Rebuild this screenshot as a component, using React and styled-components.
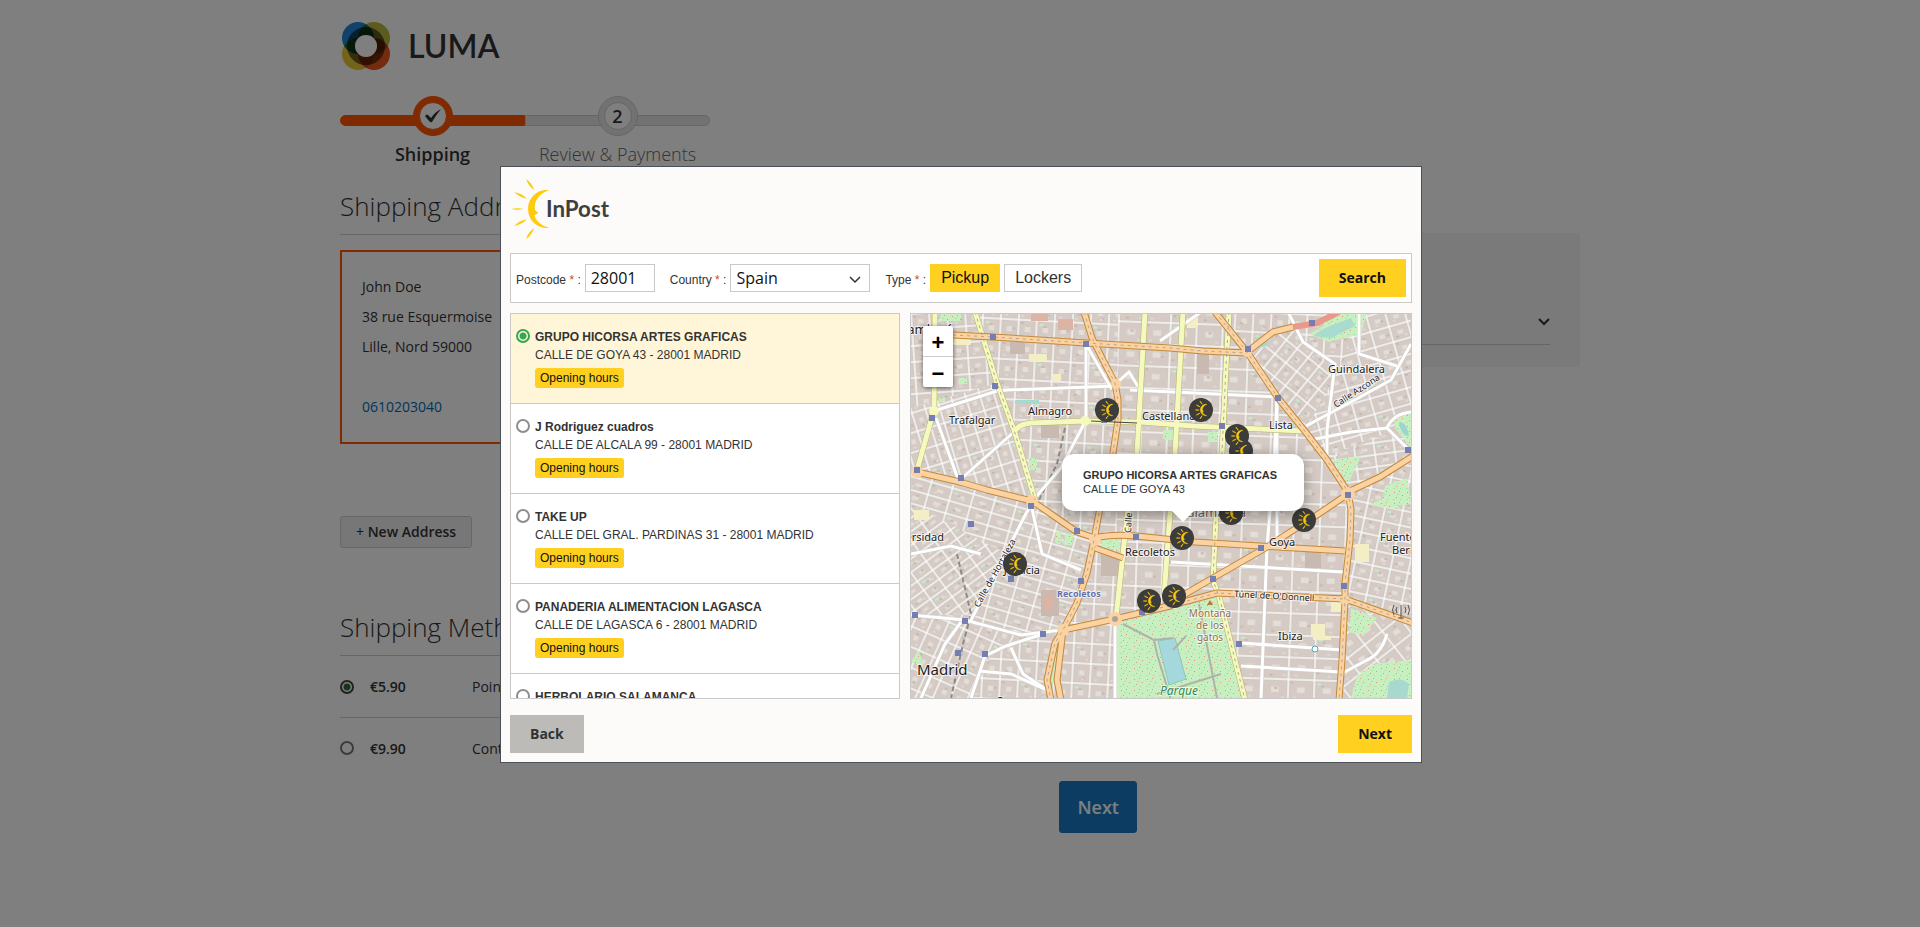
import React, { useState } from 'react'
import styled, { createGlobalStyle, css } from 'styled-components'

const points = [
    { id: 1, name: 'GRUPO HICORSA ARTES GRAFICAS', street: 'CALLE DE GOYA 43', city: '28001 MADRID' },
    { id: 2, name: 'J Rodriguez cuadros', street: 'CALLE DE ALCALA 99', city: '28001 MADRID' },
    { id: 3, name: 'TAKE UP', street: 'CALLE DEL GRAL. PARDINAS 31', city: '28001 MADRID' },
    { id: 4, name: 'PANADERIA ALIMENTACION LAGASCA', street: 'CALLE DE LAGASCA 6', city: '28001 MADRID' },
    { id: 5, name: 'HERBOLARIO SALAMANCA', street: 'CALLE DE AYALA 78', city: '28001 MADRID' },
]

const pins = [
    [196, 96], [290, 96], [330, 137], [326, 122], [320, 199],
    [393, 206], [271, 224], [238, 287], [263, 282], [104, 250],
]

const metro = [
    [82, 23], [175, 30], [84, 72], [21, 104], [6, 156], [50, 164], [120, 192], [60, 210],
    [166, 217], [225, 223], [170, 267], [100, 265], [4, 301], [54, 307], [132, 320], [47, 339],
    [74, 340], [337, 35], [401, 9], [367, 84], [311, 112], [497, 136], [437, 181], [350, 234],
    [302, 265], [433, 272], [328, 330], [231, 298], [193, 106],
]

// street grids: outline, block size and direction of each district
const districts = [
    { id: 'base', d: 'M0 0H500V384H0Z', w: 18, h: 20, r: 3 },
    { id: 'trafalgar', d: 'M0 94L86 69L124 186L0 160Z', w: 14, h: 19, r: -17 },
    { id: 'chamberi', d: 'M0 0H64L86 69L0 94Z', w: 18, h: 16, r: -4 },
    { id: 'justicia', d: 'M0 160L124 190L184 226L152 314L100 325L0 300Z', w: 22, h: 13, r: 16 },
    { id: 'malasana', d: 'M0 190L96 240L66 300L0 302Z', w: 19, h: 11, r: -36 },
    { id: 'sol', d: 'M0 300L130 320L80 340L60 384H0Z', w: 16, h: 19, r: 24 },
    { id: 'salamanca', d: 'M207 0H304L336 38L436 178V384H334L305 283L205 304Z', w: 26, h: 22, r: 2 },
    { id: 'guindalera', d: 'M336 38L378 12L425 60L400 120Z', w: 14, h: 18, r: 39 },
    { id: 'parqueavenidas', d: 'M425 60L450 0H500V110L415 142L395 116Z', w: 19, h: 16, r: -16 },
    { id: 'ventas', d: 'M416 146L500 110V142L437 176Z', w: 20, h: 12, r: -8 },
    { id: 'berro', d: 'M440 178L500 146V308L434 286Z', w: 18, h: 15, r: 12 },
    { id: 'estrella', d: 'M434 290L500 312V384H430Z', w: 22, h: 20, r: -38 },
]

const orange = [
    'M42 21L82 23L175 29L259 34L292 37L336 39',
    'M173 -2L181 24L192 46L204 69L207 86L207 106L202 139L188 199L183 226L176 259L166 289L152 316L144 329L136 366L140 386',
    'M152 316L150 333L146 366L150 386',
    'M6 158L49 168L76 176L121 187L140 200L166 218L184 224Q200 220 225 222L284 228L349 232L434 237',
    'M184 234L212 244',
    'M304 -2L336 38L367 84L393 116L416 146L437 178L440 196L439 226L434 269L434 286L431 346L428 386',
    'M437 178L469 163L502 142',
    'M437 180L406 201L356 233L302 264L276 279L259 292L204 305L152 316',
    'M249 294L280 286L306 279L349 281L434 285L502 309',
    'M336 38L362 18L382 13',
]

const yellow = [
    'M24 -2L23 96L6 156',
    'M64 -2L86 69L104 119L124 186',
    'M104 117Q108 110 120 109L174 107L229 108L282 112L392 117',
    'M234 -2L226 139L216 202L205 304',
    'M272 -2L264 139L259 200L253 282',
    'M318 -2L315 53L311 139L305 203L302 266L309 286L334 386',
]

const white = [
    'M23 97L86 77L96 76L205 72',
    'M175 30V107',
    'M174 108L150 154L122 186L102 225L60 306',
    'M104 117L50 165',
    'M25 104L47 165',
    'M175 30L200 74L218 58L228 74',
    'M0 301L54 306L110 321L150 316',
    'M132 320L95 332L74 342L60 384',
    'M120 190L131 240L170 256',
    'M100 334L112 360L136 376',
    'M68 357L100 360L138 377',
    'M219 76L284 79L366 83V232',
    'M366 84L363 150L356 233L350 384',
    'M260 248L432 258',
    'M330 352L430 358',
    'M330 329L432 336',
    'M204 308V386',
    'M249 27L290 -2',
    'M377 -2L392 28L424 50L416 116V146',
    'M395 112L440 88L480 66L500 30',
    'M404 125L440 118L476 114Q482 100 500 98',
    'M476 114L496 134',
    'M448 -2V40L486 52',
    'M430 360L456 346Q470 340 476 320',
    'M0 240L40 232L70 240',
    'M10 384L34 330L50 308',
]

const greens = [
    'M398 20L412 12L424 -2H456L450 20L418 28Z',
    'M422 146L450 142L437 170Z',
    'M191 223L208 224L210 238L190 233Z',
    'M145 218L151 218L149 230L144 230Z',
    'M154 220L163 220L161 231L153 231Z',
    'M148 318L145 368L140 370L145 335Z',
    'M30 0H50V7H28Z',
    'M0 348L8 336L12 352Z',
    'M446 362L462 350L500 346V384H440Z',
    'M440 294L466 304L452 322L438 318Z',
    'M482 102L500 98V134L484 114Z',
    'M458 190L480 182L490 196Z',
    'M474 172L496 164L500 190L470 194Z',
    'M48 64H56V70H48ZM28 84H34V88H28ZM118 144H126V156H118ZM252 116H262V126H252ZM297 118H307V128H297Z',
]

const Mark = ({ x, y, scale, bold }) => (
    <g
        transform={`translate(${x} ${y}) scale(${scale}) translate(-123 -147)`}
        fill="#fecb0c"
        stroke="#fecb0c"
        strokeWidth={bold ? 5 : 0}
        strokeLinejoin="round"
    >
        <path d="M66 147Q85 142 104 147Q85 152 66 147Z" />
        <path d="M76 96Q98 100 114 116Q90 112 76 96Z" />
        <path d="M76 198Q90 182 114 178Q98 194 76 198Z" />
        <path d="M111 57Q128 68 136 91Q118 78 111 57Z" />
        <path d="M111 237Q118 216 136 203Q128 226 111 237Z" />
        <path d="M180 91C150 86 117 110 117 147C117 184 150 208 180 203C156 198 140 182 136 166L148 159L138 150C133 121 154 99 180 91Z" />
    </g>
)

const LumaLogo = () => (
    <LumaMark viewBox="0 0 50 50" aria-hidden="true">
        <circle cx="17" cy="17" r="16" fill="#1f86d8" />
        <circle cx="33" cy="17" r="16" fill="#b9b840" />
        <circle cx="17" cy="33" r="16" fill="#e8c832" />
        <circle cx="33" cy="33" r="16" fill="#e8561c" />
        <circle cx="25" cy="25" r="15" fill="none" stroke="#77776a" strokeWidth="8" />
        <circle className="hole" cx="25" cy="25" r="11" fill="#fff" />
    </LumaMark>
)

const CityMap = () => (
    <MapDrawing viewBox="0 0 500 384" preserveAspectRatio="xMidYMid slice" role="img" aria-label="Madrid">
        <defs>
            {districts.map(({ id, w, h, r }) => (
                <pattern key={id} id={id} width={w * 3} height={h * 2} patternUnits="userSpaceOnUse" patternTransform={`rotate(${r})`}>
                    <rect width={w * 3} height={h * 2} fill="#fbfafa" />
                    {[0, 1, 2, 3, 4, 5].map((n) => {
                        const x = (n % 3) * w + 1
                        const y = Math.floor(n / 3) * h + 1
                        return (
                            <g key={n}>
                                <rect x={x} y={y} width={w - 2} height={h - 2} fill="#d5cbc4" stroke="#c9c2bc" strokeWidth="0.5" />
                                <rect x={x + w * 0.3} y={y + h * 0.3} width={w * 0.3} height={h * 0.25} fill="#e4ded9" />
                                <rect x={x + 1 + (n * 5) % (w - 6)} y={y + 1 + (n * 3) % (h - 6)} width="3" height="2" fill="#c6bab1" />
                                <rect x={x + 1 + (n * 7 + 3) % (w - 6)} y={y + h - 6} width="3" height="2" fill="#ded7d1" />
                            </g>
                        )
                    })}
                    <rect x={w + 3} y="3" width="4" height="2" fill="#c3eccb" />
                </pattern>
            ))}
            <pattern id="trees" width="13" height="11" patternUnits="userSpaceOnUse">
                <rect width="13" height="11" fill="#c8efc0" />
                <rect x="2" y="2" width="1" height="1" fill="#ee9078" />
                <rect x="7" y="1" width="1" height="1" fill="#e59a80" />
                <rect x="10" y="5" width="1" height="1" fill="#ee9078" />
                <rect x="4" y="7" width="1" height="1" fill="#e59a80" />
                <rect x="8" y="9" width="1" height="1" fill="#9fd6a0" />
                <rect x="1" y="9" width="2" height="1" fill="#b2dfab" />
                <rect x="5" y="4" width="2" height="1" fill="#b2dfab" />
            </pattern>
        </defs>
        {districts.map(({ id, d }) => <path key={id} d={d} fill={`url(#${id})`} />)}
        {greens.map((d) => <path key={d} d={d} fill="url(#trees)" />)}
        <path d="M402 22L414 14L440 4L444 12L420 24Z" fill="#a9dcd0" />
        <path d="M488 108Q496 108 498 122Q490 122 488 108Z" fill="#9fd3cf" />
        <path d="M478 368Q490 362 498 370L496 384H476Z" fill="#a7d9cf" />
        <path d="M104 86H128V90H104ZM350 27L358 25L356 32L348 34Z" fill="#a7d9cf" />
        <g fill="#f4eec4">
            <path d="M43 24H60V31H43ZM118 40H136V48H118ZM142 60H150V68H142ZM276 4H286V14H276ZM3 196H18V206H3ZM420 284H432V298H420ZM444 230H458V248H444ZM400 310H414V322H400ZM402 322H420V326H402Z" />
        </g>
        <g fill="#c9bab1">
            <path d="M99 28H114V40H99ZM286 40H298V60H286ZM190 240H208V262H190ZM394 238H410V254H394ZM130 110H148V124H130ZM130 276H148V302H130Z" />
        </g>
        <path d="M120 0H137V7H120ZM147 5H162V16H147ZM133 282H142V296H133Z" fill="#dcb4a5" />
        <path d="M154 114L146 150L128 186M46 240L60 300L52 330L40 384" fill="none" stroke="#8b8a89" strokeWidth="2" strokeDasharray="5 3" />
        <path d="M206 309L259 296L306 283L332 384H205Z" fill="url(#trees)" />
        <path d="M247 327L264 324L275 365L258 371Z" fill="#a5d8dc" stroke="#8fc8bb" />
        <path d="M212 310L243 326L246 340L260 386M243 326L262 324M246 380L310 360M288 290L306 384M262 336L275 322" fill="none" stroke="#b2b2ac" strokeWidth="2" />
        <g fill="none" stroke="#cfcdca" strokeWidth="4">
            {white.map((d) => <path key={d} d={d} />)}
        </g>
        <g fill="none" stroke="#fff" strokeWidth="3">
            {white.map((d) => <path key={d} d={d} />)}
        </g>
        <g fill="none" stroke="#b2b46a" strokeWidth="6" strokeLinejoin="round">
            {yellow.map((d) => <path key={d} d={d} />)}
        </g>
        <g fill="none" stroke="#f6f9bd" strokeWidth="5" strokeLinejoin="round">
            {yellow.map((d) => <path key={d} d={d} />)}
        </g>
        <circle cx="23" cy="97" r="5" fill="#f6f9bd" />
        <circle cx="174" cy="107" r="5" fill="#f6f9bd" />
        <g fill="none" stroke="#c08a3e" strokeWidth="7" strokeLinejoin="round">
            {orange.map((d) => <path key={d} d={d} />)}
        </g>
        <g fill="none" stroke="#fcd2a0" strokeWidth="5" strokeLinejoin="round">
            {orange.map((d) => <path key={d} d={d} />)}
        </g>
        <g fill="#fcd2a0">
            <circle cx="6" cy="158" r="6" />
            <circle cx="205" cy="70" r="5" />
            <circle cx="121" cy="187" r="6" />
            <circle cx="184" cy="226" r="6" />
            <circle cx="204" cy="305" r="7" />
            <circle cx="152" cy="316" r="6" />
            <circle cx="336" cy="38" r="5" />
            <circle cx="437" cy="180" r="7" />
            <circle cx="434" cy="286" r="5" />
        </g>
        <circle cx="204" cy="305" r="3" fill="#a9a59c" />
        <g fill="none" stroke="#b0a59a" strokeWidth="1" strokeDasharray="3 4">
            <path d={orange[0]} />
            <path d={orange[1]} />
            <path d={orange[5]} />
            <path d={yellow[1]} />
            <path d={yellow[5]} />
            <path d={orange[8]} />
        </g>
        <path d="M180 107L226 109" stroke="#444" />
        <path d="M382 13L406 9L428 -2" fill="none" stroke="#e9988c" strokeWidth="6" />
        <g fill="#747eb2">
            {metro.map(([x, y]) => <rect key={`${x}-${y}`} x={x - 3} y={y - 3} width="6" height="6" />)}
        </g>
        <circle cx="404" cy="335" r="3" fill="#fff" stroke="#58a5b8" />
        <path d="M490 291V304M487 304H493M486 293Q484 296 486 299M494 293Q496 296 494 299M483 291Q480 296 483 301M497 291Q500 296 497 301" fill="none" stroke="#555" />
        <path d="M296 291L299 286L302 291Z" fill="#b57a35" />
        <MapLabel x="-20" y="20" $size={13}>Chamberí</MapLabel>
        <MapLabel x="117" y="101">Almagro</MapLabel>
        <MapLabel x="38" y="110">Trafalgar</MapLabel>
        <MapLabel x="231" y="106">Castellana</MapLabel>
        <MapLabel x="358" y="115">Lista</MapLabel>
        <MapLabel x="417" y="59">Guindalera</MapLabel>
        <MapLabel $size={9} transform="translate(425 94) rotate(-33)">Calle Azcona</MapLabel>
        <MapLabel x="33" y="227" textAnchor="end">Universidad</MapLabel>
        <MapLabel x="129" y="260" textAnchor="end">Justicia</MapLabel>
        <MapLabel $size={9} transform="translate(68 294) rotate(-61)">Calle de Hortaleza</MapLabel>
        <MapLabel $size={9} transform="translate(220 219) rotate(-87)">Calle de Serrano</MapLabel>
        <MapLabel x="214" y="242">Recoletos</MapLabel>
        <MapLabel x="146" y="283" $size={9} $color="#6670ad" $bold>Recoletos</MapLabel>
        <MapLabel x="269" y="203" $size={13} $color="#666">Salamanca</MapLabel>
        <MapLabel x="358" y="232">Goya</MapLabel>
        <MapLabel x="469" y="227">Fuente del</MapLabel>
        <MapLabel x="481" y="240">Berro</MapLabel>
        <MapLabel $size={9} transform="translate(323 283) rotate(3)">Túnel de O'Donnell</MapLabel>
        <MapLabel x="367" y="326">Ibiza</MapLabel>
        <MapLabel x="299" y="303" $size={10} $color="#937045" textAnchor="middle">Montaña</MapLabel>
        <MapLabel x="299" y="315" $size={10} $color="#937045" textAnchor="middle">de los</MapLabel>
        <MapLabel x="299" y="327" $size={10} $color="#937045" textAnchor="middle">gatos</MapLabel>
        <MapLabel x="249" y="381" $size={12} $color="#2f8a4a" fontStyle="italic">Parque</MapLabel>
        <MapLabel x="6" y="361" $size={15}>Madrid</MapLabel>
        <MapLabel x="85" y="391">Centro</MapLabel>
        {pins.map(([x, y]) => (
            <g key={`${x}-${y}`}>
                <circle cx={x} cy={y} r="12" fill="#3c3c3b" />
                <Mark x={x} y={y} scale={0.1} bold />
            </g>
        ))}
    </MapDrawing>
)

const App = () => {
    const [selected, setSelected] = useState(1)
    const [type, setType] = useState('Pickup')
    const [postcode, setPostcode] = useState('28001')
    const [method, setMethod] = useState('point')
    const current = points.find((point) => point.id === selected)

    return (
        <>
            <GlobalStyle />
            <Page>
                <Brand href="#">
                    <LumaLogo />
                    LUMA
                </Brand>
                <Steps>
                    <Step $active>
                        <Bullet $active>
                            <svg width="18" height="16" viewBox="0 0 18 16" aria-hidden="true">
                                <path d="M1 8Q3 5 5 8L7 10Q11 4 17 1Q12 7 8 14Q7 15 5 13Z" fill="#333" />
                            </svg>
                        </Bullet>
                        Shipping
                    </Step>
                    <Step>
                        <Bullet>2</Bullet>
                        Review &amp; Payments
                    </Step>
                </Steps>
                <Columns>
                    <main>
                        <Title>Shipping Address</Title>
                        <Address>
                            John Doe<br />
                            38 rue Esquermoise<br />
                            Lille, Nord 59000<br />
                            <br />
                            <a href="tel:0610203040">0610203040</a>
                        </Address>
                        <NewAddress type="button"><span>+</span> New Address</NewAddress>
                        <Title>Shipping Methods</Title>
                        <Method>
                            <Radio $page type="radio" name="method" checked={method === 'point'} onChange={() => setMethod('point')} />
                            <b>€5.90</b>
                            Point
                        </Method>
                        <Method>
                            <Radio $page type="radio" name="method" checked={method === 'contact'} onChange={() => setMethod('contact')} />
                            <b>€9.90</b>
                            Contact
                        </Method>
                        <Continue type="button">Next</Continue>
                    </main>
                    <Summary>
                        <SummaryToggle type="button" aria-label="Order Summary">
                            <Chevron width="12" height="8" viewBox="0 0 12 8"><path d="M1 1L6 6L11 1" /></Chevron>
                        </SummaryToggle>
                    </Summary>
                </Columns>
            </Page>
            <Backdrop>
                <Modal role="dialog" aria-label="InPost">
                    <ModalHeader>
                        <svg width="102" height="62" viewBox="66 54 306 186" role="img" aria-label="InPost">
                            <Mark x={123} y={147} scale={1} />
                            <LogoText x="171" y="171">InPost</LogoText>
                        </svg>
                    </ModalHeader>
                    <Filters>
                        <Field>
                            <label htmlFor="postcode">Postcode <em>*</em> :</label>
                            <TextInput id="postcode" value={postcode} onChange={(e) => setPostcode(e.target.value)} />
                        </Field>
                        <Field>
                            <label htmlFor="country">Country <em>*</em> :</label>
                            <SelectBox>
                                <select id="country" defaultValue="ES">
                                    <option value="ES">Spain</option>
                                    <option value="FR">France</option>
                                </select>
                                <Chevron width="12" height="8" viewBox="0 0 12 8"><path d="M1 1L6 6L11 1" /></Chevron>
                            </SelectBox>
                        </Field>
                        <Field>
                            <label id="type">Type <em>*</em> :</label>
                            <TypeGroup role="group" aria-labelledby="type">
                                {['Pickup', 'Lockers'].map((name) => (
                                    <TypeButton key={name} type="button" $active={type === name} onClick={() => setType(name)}>{name}</TypeButton>
                                ))}
                            </TypeGroup>
                        </Field>
                        <Action type="button">Search</Action>
                    </Filters>
                    <Results>
                        <List>
                            {points.map((point) => (
                                <Item key={point.id} $selected={point.id === selected}>
                                    <Radio
                                        id={`point-${point.id}`}
                                        type="radio"
                                        name="point"
                                        checked={point.id === selected}
                                        onChange={() => setSelected(point.id)}
                                    />
                                    <div>
                                        <label htmlFor={`point-${point.id}`}>{point.name}</label>
                                        <p>{point.street} - {point.city}</p>
                                        <Hours type="button">Opening hours</Hours>
                                    </div>
                                </Item>
                            ))}
                        </List>
                        <MapBox>
                            <CityMap />
                            <ZoomControl>
                                <button type="button" aria-label="Zoom in">+</button>
                                <button type="button" aria-label="Zoom out">−</button>
                            </ZoomControl>
                            <Popup>
                                <b>{current.name}</b>
                                <span>{current.street}</span>
                            </Popup>
                        </MapBox>
                    </Results>
                    <ModalFooter>
                        <Action type="button" $muted>Back</Action>
                        <Action type="button">Next</Action>
                    </ModalFooter>
                </Modal>
            </Backdrop>
        </>
    )
}

const GlobalStyle = createGlobalStyle`
    *{
        box-sizing: border-box;
    }
    body{
        margin: 0;
        background: white;
        color: #333;
        font-family: "Open Sans", "Noto Sans", sans-serif;
        font-size: 14px;
    }
    button, input, select{
        font-family: inherit;
    }
`
const Page = styled.div`
    max-width: 1280px;
    margin: 0 auto;
    padding: 21px 20px 40px;
`
const Brand = styled.a`
    display: flex;
    align-items: center;
    gap: 16px;
    color: #333;
    font-family: Lato, sans-serif;
    font-size: 32px;
    font-weight: 600;
    line-height: 50px;
    text-decoration: none;
`
const LumaMark = styled.svg`
    width: 52px;
    height: 50px;
    isolation: isolate;
    circle{
        mix-blend-mode: multiply;
    }
    .hole{
        mix-blend-mode: normal;
    }
`
const Steps = styled.ol`
    display: flex;
    margin: 25px 0 0;
    padding: 0;
    list-style: none;
`
const Step = styled.li`
    position: relative;
    display: flex;
    flex-direction: column;
    align-items: center;
    gap: 8px;
    width: 185px;
    font-size: 18px;
    line-height: 20px;
    font-weight: ${(props) => (props.$active ? 600 : 300)};
    color: ${(props) => (props.$active ? '#333' : '#666')};
    &::before{
        content: '';
        position: absolute;
        top: 19px;
        left: 0;
        right: 0;
        height: 9px;
        background: ${(props) => (props.$active ? '#ff5501' : '#e4e4e4')};
        border: 1px solid ${(props) => (props.$active ? '#ff5501' : '#ccc')};
        border-radius: ${(props) => (props.$active ? '6px 0 0 6px' : '0 6px 6px 0')};
    }
`
const Bullet = styled.span`
    position: relative;
    display: grid;
    place-items: center;
    width: 40px;
    height: 40px;
    border-radius: 50%;
    font-weight: 600;
    color: #333;
    background: ${(props) => (props.$active ? '#ff5501' : '#e4e4e4')};
    border: 1px solid ${(props) => (props.$active ? '#ff5501' : '#ccc')};
    isolation: isolate;
    &::before{
        content: '';
        position: absolute;
        inset: 5px;
        z-index: -1;
        border-radius: 50%;
        background: white;
        border: 1px solid ${(props) => (props.$active ? '#ff5501' : '#ccc')};
    }
`
const Columns = styled.div`
    display: grid;
    grid-template-columns: minmax(0, 797fr) minmax(0, 414fr);
    gap: 29px;
    align-items: start;
`
const Title = styled.h2`
    margin: 24px 0 15px;
    padding-bottom: 10px;
    border-bottom: 1px solid #ccc;
    font-size: 26px;
    font-weight: 300;
    line-height: 36px;
`
const Address = styled.address`
    width: 33%;
    margin-bottom: 72px;
    padding: 20px;
    border: 2px solid #ff5501;
    font-style: normal;
    line-height: 30px;
    a{
        color: #006bb4;
        text-decoration: none;
    }
`
const NewAddress = styled.button`
    display: block;
    margin-bottom: 61px;
    padding: 7px 15px;
    border: 1px solid #ccc;
    border-radius: 3px;
    background: #eee;
    color: #333;
    font-size: 14px;
    font-weight: 600;
    line-height: 16px;
    span{
        font-weight: 400;
    }
`
const Method = styled.label`
    display: grid;
    grid-template-columns: 14px 86px 1fr;
    column-gap: 16px;
    align-items: center;
    height: 61px;
    b{
        font-weight: 600;
    }
    ${Title} + &{
        margin-top: -15px;
    }
    & + &{
        border-top: 1px solid #ccc;
    }
`
const Continue = styled.button`
    display: block;
    margin: 3px 0 0 auto;
    padding: 14px 17px;
    border: 1px solid #1979c3;
    border-radius: 3px;
    background: #1979c3;
    color: white;
    font-size: 18px;
    font-weight: 600;
    line-height: 22px;
`
const Summary = styled.aside`
    margin-top: 69px;
    padding: 22px 30px;
    background: #f5f5f5;
`
const SummaryToggle = styled.button`
    display: flex;
    justify-content: flex-end;
    align-items: flex-end;
    width: 100%;
    height: 90px;
    padding: 0 0 18px;
    border: 0;
    border-bottom: 1px solid #ccc;
    background: none;
`
const Chevron = styled.svg`
    fill: none;
    stroke: #333;
    stroke-width: 2;
`
const Backdrop = styled.div`
    position: fixed;
    inset: 0;
    display: flex;
    align-items: flex-start;
    padding: 166px 498px 0 500px;
    background: rgba(0, 0, 0, 0.5);
    @media (max-width: 1700px){
        padding: 20px;
    }
`
const Modal = styled.section`
    flex: 1;
    min-width: 0;
    padding: 0 9px 9px;
    border: 1px solid #4a5058;
    background: #fcfbf9;
    font-family: "Liberation Sans", Arial, sans-serif;
    font-size: 12px;
    line-height: 18px;
`
const ModalHeader = styled.header`
    padding: 11px 1px 13px;
    svg{
        display: block;
    }
`
const LogoText = styled.text`
    font-family: Lato, sans-serif;
    font-size: 67px;
    font-weight: 700;
    fill: #3f3f3f;
`
const Filters = styled.form`
    display: flex;
    align-items: center;
    gap: 15px;
    padding: 5px;
    border: 1px solid #c9c9c9;
    background: white;
    > button{
        margin-left: auto;
    }
`
const Field = styled.div`
    display: flex;
    align-items: center;
    gap: 4px;
    label{
        padding-top: 3px;
    }
    em{
        color: #d14a1c;
        font-style: normal;
    }
`
const control = css`
    height: 28px;
    border: 1px solid #c9c9c9;
    background: white;
    color: #111;
    font-size: 16px;
`
const TextInput = styled.input`
    ${control}
    width: 70px;
    padding: 0 5px;
    font-family: "Open Sans", "Noto Sans", sans-serif;
`
const SelectBox = styled.div`
    position: relative;
    select{
        ${control}
        appearance: none;
        display: block;
        width: 140px;
        padding: 0 5px;
        border-radius: 0;
        font-family: "Open Sans", "Noto Sans", sans-serif;
    }
    svg{
        position: absolute;
        top: 12px;
        right: 9px;
        stroke-width: 1.5;
        pointer-events: none;
    }
`
const TypeGroup = styled.div`
    display: flex;
    gap: 4px;
`
const TypeButton = styled.button`
    ${control}
    padding: 0 10px;
    color: #333;
    ${(props) => props.$active && css`
        border-color: #ffd01f;
        background: #ffd01f;
        color: #111;
    `}
`
const Action = styled.button`
    padding: 0 20px;
    border: 0;
    background: ${(props) => (props.$muted ? '#bdbbb8' : '#ffd01f')};
    color: ${(props) => (props.$muted ? '#333' : '#111')};
    font-family: "Open Sans", "Noto Sans", sans-serif;
    font-size: 14px;
    font-weight: 700;
    line-height: 38px;
`
const Results = styled.div`
    display: grid;
    grid-template-columns: minmax(0, 390fr) minmax(0, 502fr);
    gap: 10px;
    height: 386px;
    margin-top: 10px;
`
const List = styled.ul`
    height: 386px;
    margin: 0;
    padding: 0;
    overflow: hidden;
    border: 1px solid #c9c9c9;
    border-top: 0;
    list-style: none;
`
const Item = styled.li`
    display: flex;
    align-items: flex-start;
    gap: 5px;
    height: 90px;
    padding: 14px 5px;
    border-top: 1px solid #c9c9c9;
    background: ${(props) => (props.$selected ? '#fff6d9' : 'white')};
    label{
        display: block;
        font-weight: 700;
    }
    p{
        margin: 0 0 4px;
    }
`
const Radio = styled.input`
    appearance: none;
    flex: none;
    width: 14px;
    height: 14px;
    margin: ${(props) => (props.$page ? 0 : '1px 0 0')};
    border: 2px solid ${(props) => (props.$page ? '#777' : '#8e8e8e')};
    border-radius: 50%;
    &:checked{
        border-color: ${(props) => (props.$page ? '#444' : '#37a551')};
        background: radial-gradient(circle, ${(props) => (props.$page ? '#2c6b35' : '#37a551')} 3px, transparent 4px);
    }
`
const Hours = styled.button`
    display: block;
    padding: 0 5px;
    border: 0;
    border-radius: 3px;
    background: #ffd01f;
    color: #111;
    font-size: 12px;
    line-height: 20px;
`
const MapBox = styled.div`
    position: relative;
    overflow: hidden;
    border: 1px solid #c9c9c9;
`
const MapDrawing = styled.svg`
    display: block;
    width: 100%;
    height: 100%;
`
const MapLabel = styled.text`
    font-family: "Noto Sans", "Open Sans", sans-serif;
    font-size: ${(props) => props.$size || 11}px;
    font-weight: ${(props) => (props.$bold ? 700 : 400)};
    fill: ${(props) => props.$color || '#222'};
    stroke: rgba(255, 255, 255, 0.7);
    stroke-width: 2px;
    paint-order: stroke;
`
const ZoomControl = styled.div`
    position: absolute;
    top: 12px;
    left: 12px;
    width: 30px;
    border-radius: 2px;
    background: white;
    box-shadow: 0 1px 4px rgba(0, 0, 0, 0.6);
    button{
        display: block;
        width: 30px;
        height: 30px;
        padding: 3px 0 0;
        border: 0;
        background: none;
        color: black;
        font-size: 22px;
        font-weight: 700;
        line-height: 27px;
    }
    button + button{
        height: 31px;
        border-top: 1px solid #ccc;
    }
`
const Popup = styled.div`
    position: absolute;
    top: 140px;
    left: calc(50% - 99px);
    width: 242px;
    padding: 14px 21px 15px;
    border-radius: 12px;
    background: white;
    box-shadow: 0 3px 14px rgba(0, 0, 0, 0.4);
    font-size: 11px;
    line-height: 14px;
    b, span{
        display: block;
    }
    &::after{
        content: '';
        position: absolute;
        top: 100%;
        left: calc(50% - 11px);
        border: 11px solid transparent;
        border-top-color: white;
        border-bottom: 0;
    }
`
const ModalFooter = styled.footer`
    display: flex;
    justify-content: space-between;
    margin-top: 16px;
`
export default App
